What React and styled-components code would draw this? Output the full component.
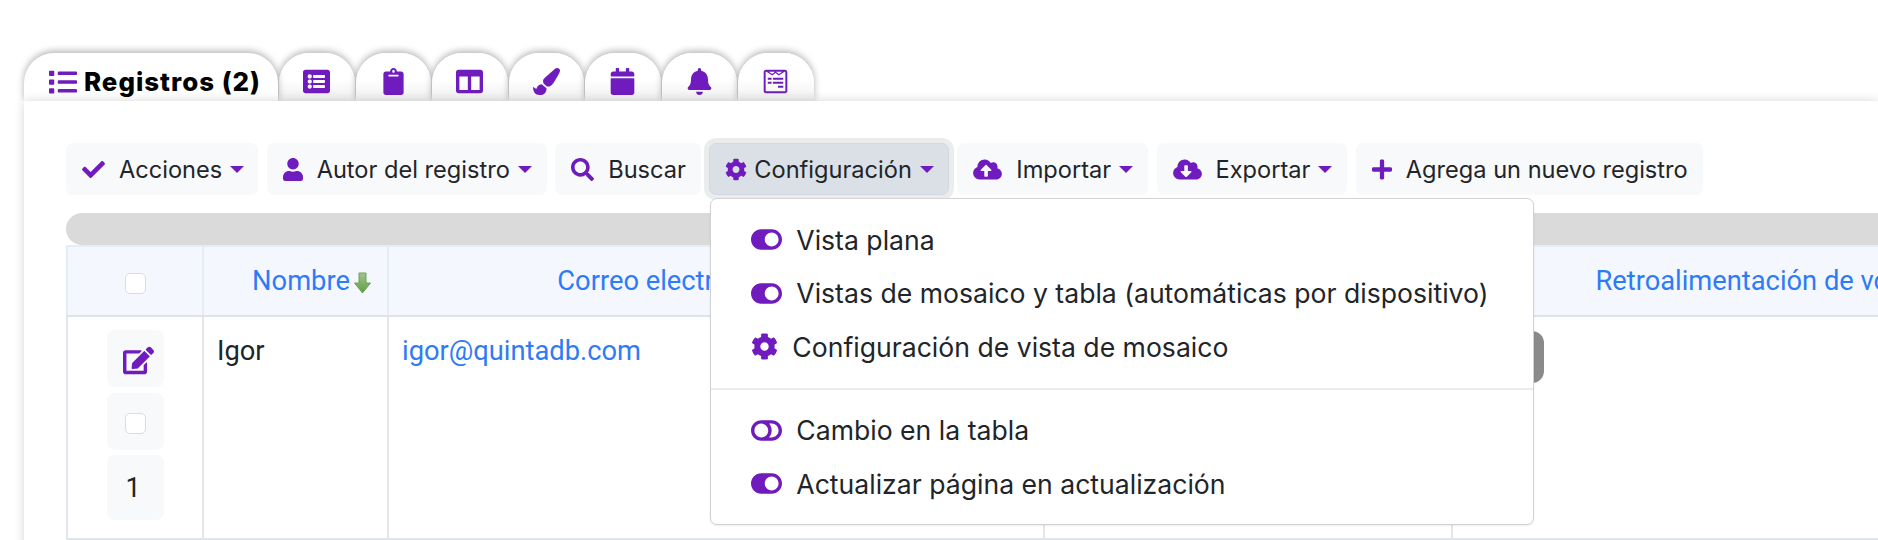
import React from "react";
import styled, { createGlobalStyle } from "styled-components";
import {
  FaList, FaListAlt, FaClipboard, FaColumns, FaPaintBrush, FaCalendar, FaBell, FaWpforms,
  FaCheck, FaUser, FaSearch, FaCog, FaCloudUploadAlt, FaCloudDownloadAlt, FaPlus, FaEdit,
  FaToggleOn, FaToggleOff,
} from "react-icons/fa";

const PURPLE = "#701bbd";

const Global = createGlobalStyle`
  html, body { margin: 0; padding: 0; background: #fff; }
  body { font-family: "Inter", "Liberation Sans", sans-serif; color: #212529; }
`;

const Page = styled.div`
  width: 1878px;
  height: 540px;
  overflow: hidden;
  padding: 53px 0 0 24px;
  box-sizing: border-box;
`;

const TabBar = styled.div`
  display: flex;
  gap: 1px;
  height: 48px;
  position: relative;
  z-index: 0;
`;

const Tab = styled.div`
  width: ${(p) => (p.$active ? "254px" : "75.5px")};
  box-sizing: border-box;
  height: 48px;
  border-radius: 30px 30px 0 0;
  background: ${(p) => (p.$active ? "#fff" : "linear-gradient(#fff 55%, #efefef)")};
  box-shadow: 0 -2px 7px rgba(0, 0, 0, 0.3);
  clip-path: inset(-8px -8px 0 -8px);
  display: flex;
  align-items: center;
  justify-content: center;
  gap: 7px;
  color: ${PURPLE};
  font-size: 27px;
  position: relative;
  z-index: ${(p) => (p.$active ? 2 : 1)};
  padding: 9px 0 0 ${(p) => (p.$active ? 8 : 0)}px;
`;

const TabLabel = styled.span`
  color: #000;
  font-family: "Inter", sans-serif;
  font-weight: 800;
  font-size: 25.9px;
  letter-spacing: 1px;
  line-height: 1;
`;

const Panel = styled.div`
  position: relative;
  z-index: 1;
  background: #fff;
  height: 440px;
  padding: 42px 0 0 42px;
  box-shadow: 0 0 10px rgba(0, 0, 0, 0.16);
`;

const Toolbar = styled.div`
  display: flex;
  gap: 8.4px;
  height: 52px;
`;

const ButtonWrap = styled.div`
  position: relative;
  flex: none;
`;

const ToolButton = styled.div`
  height: 52px;
  box-sizing: border-box;
  display: flex;
  align-items: center;
  padding: 0 ${(p) => p.$right || 14}px 0 15px;
  border-radius: 7px;
  background: ${(p) => (p.$open ? "#dae0e5" : "#f8f9fa")};
  border: 1px solid ${(p) => (p.$open ? "#d3d9df" : "#f8f9fa")};
  box-shadow: ${(p) => (p.$open ? "0 0 0 5px #ebecee" : "none")};
  font-size: 23.6px;
  white-space: nowrap;
  color: #212529;
`;

const BtnIcon = styled.span`
  display: flex;
  color: ${PURPLE};
  margin-right: ${(p) => p.$gap || 14}px;
  svg {
    width: ${(p) => p.$w || 23}px;
    height: 23px;
  }
`;

const Caret = styled.span`
  width: 0;
  height: 0;
  margin-left: 8px;
  border-left: 7px solid transparent;
  border-right: 7px solid transparent;
  border-top: 7px solid ${PURPLE};
`;

const Menu = styled.div`
  position: absolute;
  z-index: 5;
  top: 55px;
  left: 1px;
  width: 824px;
  height: 327px;
  box-sizing: border-box;
  padding: 14px 0;
  background: #fff;
  border: 1.5px solid #d2d2d4;
  border-radius: 7px;
  box-shadow: 0 1px 2px rgba(0, 0, 0, 0.08);
`;

const MenuItem = styled.div`
  height: 53.5px;
  display: flex;
  align-items: center;
  padding-left: 40px;
  font-size: 26.6px;
  color: #212529;
  white-space: nowrap;
`;

const MenuIcon = styled.span`
  display: flex;
  color: ${PURPLE};
  font-size: ${(p) => p.$size || 31}px;
  margin-right: ${(p) => p.$gap || 14}px;
`;

const MenuDivider = styled.div`
  height: 2px;
  background: #ececf0;
  margin: 14px 0;
`;

const Scrollbar = styled.div`
  height: 32px;
  margin-top: 18px;
  background: #dadada;
  border-radius: 16px 0 0 16px;
`;

const Table = styled.table`
  border-collapse: collapse;
  table-layout: fixed;
  width: 1979px;
  font-family: "Roboto", sans-serif;
  font-size: 27.3px;
`;

const Th = styled.th`
  width: ${(p) => p.$w}px;
  height: 70px;
  box-sizing: border-box;
  background: #f4f8fe;
  border: 2px solid #e3edf6;
  border-bottom-color: #dfe3e8;
  font-weight: 400;
  color: #2f7bf5;
  text-align: center;
  vertical-align: middle;
  white-space: nowrap;
  padding: 0 ${(p) => p.$pr || 0}px 0 ${(p) => p.$pl || 0}px;
  overflow: hidden;
`;

const Td = styled.td`
  height: 223px;
  box-sizing: border-box;
  border: 2px solid #e2e6ec;
  vertical-align: top;
  padding: 17px 13px 0;
  text-align: left;
  line-height: 34px;
  color: #212529;
`;

const ActionCell = styled(Td)`
  padding: 13px 0 0;
`;

const ActionStack = styled.div`
  display: flex;
  flex-direction: column;
  align-items: center;
`;

const ActionBox = styled.div`
  width: 57px;
  height: ${(p) => p.$h}px;
  margin-bottom: ${(p) => p.$mb || 0}px;
  background: #f8f9fa;
  border-radius: 8px;
  display: flex;
  align-items: center;
  justify-content: center;
  padding: ${(p) => p.$pt || 0}px 0 0 ${(p) => p.$pl || 0}px;
  box-sizing: border-box;
  color: ${PURPLE};
  font-size: 31px;
`;

const Number = styled.span`
  color: #212529;
  font-size: 27px;
  margin-right: 4px;
`;

const Check = styled.input.attrs({ type: "checkbox" })`
  appearance: none;
  margin: 0;
  width: 21px;
  height: 21px;
  box-sizing: border-box;
  background: #fff;
  border: 1.5px solid #dcdcdc;
  border-radius: 5px;
`;

const HeadCheck = styled(Check)`
  position: relative;
  top: 4px;
`;

const Mail = styled.span`
  color: #2f7bf5;
`;

const SortWrap = styled.span`
  display: inline-flex;
  align-items: center;
`;

const SortArrow = styled.svg`
  width: 17px;
  height: 22px;
  margin-left: 4px;
  position: relative;
  top: 2px;
`;

const GreyButton = styled.div`
  width: 75px;
  height: 52px;
  margin: -3px 0 0 3px;
  background: #8a8a8a;
  border-radius: 12px;
`;

export default function App() {
  return (
    <Page>
      <Global />
      <TabBar>
        <Tab $active>
          <FaList size={28} />
          <TabLabel>Registros (2)</TabLabel>
        </Tab>
        <Tab><FaListAlt /></Tab>
        <Tab><FaClipboard /></Tab>
        <Tab><FaColumns /></Tab>
        <Tab><FaPaintBrush /></Tab>
        <Tab><FaCalendar /></Tab>
        <Tab><FaBell /></Tab>
        <Tab><FaWpforms /></Tab>
      </TabBar>
      <Panel>
        <Toolbar>
          <ToolButton $right={13}>
            <BtnIcon><FaCheck /></BtnIcon>Acciones<Caret />
          </ToolButton>
          <ToolButton>
            <BtnIcon $w={20}><FaUser /></BtnIcon>Autor del registro<Caret />
          </ToolButton>
          <ToolButton>
            <BtnIcon><FaSearch /></BtnIcon>Buscar
          </ToolButton>
          <ButtonWrap>
            <ToolButton $open>
              <BtnIcon $w={22} $gap={7}><FaCog /></BtnIcon>Configuración<Caret />
            </ToolButton>
            <Menu>
              <MenuItem><MenuIcon><FaToggleOn /></MenuIcon>Vista plana</MenuItem>
              <MenuItem><MenuIcon><FaToggleOn /></MenuIcon>Vistas de mosaico y tabla (automáticas por dispositivo)</MenuItem>
              <MenuItem><MenuIcon $size={27}><FaCog /></MenuIcon>Configuración de vista de mosaico</MenuItem>
              <MenuDivider />
              <MenuItem><MenuIcon><FaToggleOff /></MenuIcon>Cambio en la tabla</MenuItem>
              <MenuItem><MenuIcon><FaToggleOn /></MenuIcon>Actualizar página en actualización</MenuItem>
            </Menu>
          </ButtonWrap>
          <ToolButton>
            <BtnIcon $w={29}><FaCloudUploadAlt /></BtnIcon>Importar<Caret />
          </ToolButton>
          <ToolButton>
            <BtnIcon $w={29}><FaCloudDownloadAlt /></BtnIcon>Exportar<Caret />
          </ToolButton>
          <ToolButton>
            <BtnIcon $w={20}><FaPlus /></BtnIcon>Agrega un nuevo registro
          </ToolButton>
        </Toolbar>
        <Scrollbar />
        <Table>
          <thead>
            <tr>
              <Th $w={136}><HeadCheck /></Th>
              <Th $w={185} $pl={32}>
                <SortWrap>
                  Nombre
                  <SortArrow viewBox="0 0 17 22">
                    <defs>
                      <linearGradient id="sortGreen" x1="0" y1="0" x2="0" y2="1">
                        <stop offset="0" stopColor="#a3c58c" />
                        <stop offset="1" stopColor="#5f9e45" />
                      </linearGradient>
                    </defs>
                    <path d="M5 1h7v10h4.5L8.5 21 .5 11H5z" fill="url(#sortGreen)" stroke="#6f9f58" strokeWidth="1" />
                  </SortArrow>
                </SortWrap>
              </Th>
              <Th $w={656} $pr={94}>Correo electrónico</Th>
              <Th $w={408}></Th>
              <Th $w={594}>Retroalimentación de voz</Th>
            </tr>
          </thead>
          <tbody>
            <tr>
              <ActionCell>
                <ActionStack>
                  <ActionBox $h={57} $mb={6} $pt={4} $pl={6}><FaEdit /></ActionBox>
                  <ActionBox $h={57} $mb={5} $pt={4}><Check /></ActionBox>
                  <ActionBox $h={65}><Number>1</Number></ActionBox>
                </ActionStack>
              </ActionCell>
              <Td>Igor</Td>
              <Td><Mail>igor@quintadb.com</Mail></Td>
              <Td></Td>
              <Td><GreyButton /></Td>
            </tr>
          </tbody>
        </Table>
      </Panel>
    </Page>
  );
}
